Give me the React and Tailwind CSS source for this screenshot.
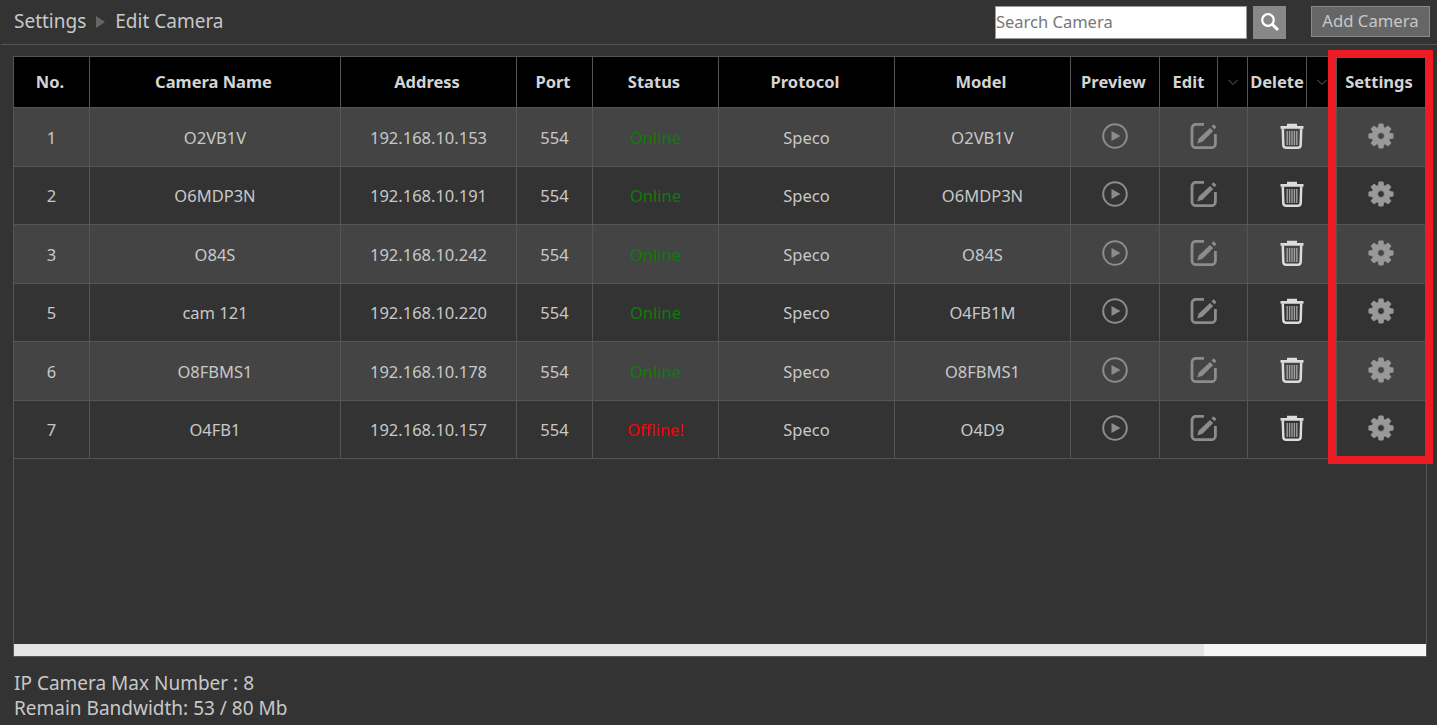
const cameras = [
  { no: 1, name: 'O2VB1V', address: '192.168.10.153', status: 'Online', model: 'O2VB1V' },
  { no: 2, name: 'O6MDP3N', address: '192.168.10.191', status: 'Online', model: 'O6MDP3N' },
  { no: 3, name: 'O84S', address: '192.168.10.242', status: 'Online', model: 'O84S' },
  { no: 5, name: 'cam 121', address: '192.168.10.220', status: 'Online', model: 'O4FB1M' },
  { no: 6, name: 'O8FBMS1', address: '192.168.10.178', status: 'Online', model: 'O8FBMS1' },
  { no: 7, name: 'O4FB1', address: '192.168.10.157', status: 'Offline!', model: 'O4D9' },
]

// 8 tooth gear outline, hole cut with evenodd
const gearPath = (() => {
  const pts = []
  for (let i = 0; i < 8; i++) {
    const a = (i * Math.PI) / 4 - Math.PI / 2
    const at = (r, d) => `${(13 + r * Math.cos(a + d)).toFixed(2)} ${(13 + r * Math.sin(a + d)).toFixed(2)}`
    pts.push(at(9, -0.3), at(12.3, -0.17), at(12.3, 0.17), at(9, 0.3))
  }
  const hole = 'M9.600 13a3.400 3.400 0 1 0 6.800 0a3.400 3.400 0 1 0 -6.800 0z'
  return `M${pts.join('L')}z ${hole}`
})()

function PlayIcon() {
  return (
    <svg width="28" height="28" viewBox="0 0 28 28" fill="none" className="text-[#8c8c8c]">
      <circle cx="14" cy="14" r="11.8" stroke="currentColor" strokeWidth="2" />
      <path d="M10.500 9 19.500 14l-9 5z" fill="currentColor" />
    </svg>
  )
}

function EditIcon() {
  return (
    <svg width="27" height="26" viewBox="0 0 27 26" fill="none" className="text-[#8c8c8c]">
      <path d="M14 2.300H6A4 4 0 0 0 2 6.300v15.400a4 4 0 0 0 4 4h15.400a4 4 0 0 0 4-4V12" stroke="currentColor" strokeWidth="2.800" transform="translate(0 -1)" />
      <path d="M20 5 23.200 8 12.500 18.800 7.200 20.500 8.800 15.500z" fill="currentColor" />
      <path d="M21.500 3.500 23.500 1.200 26.500 4 24.500 6.300z" fill="currentColor" />
    </svg>
  )
}

function TrashIcon() {
  return (
    <svg width="24" height="26" viewBox="0 0 24 26" fill="none" className="text-[#dcdcdc]">
      <path d="M0.500 3h23v2.700H0.500z M7 3V0.700h10V3z" fill="currentColor" />
      <path d="M2.800 5.500 3.300 22q0.100 2.800 3 2.800h11.400q2.900 0 3-2.800L21.200 5.500" stroke="currentColor" strokeWidth="2.500" />
      <path d="M7.200 8v14M9.600 8v14M12 8v14M14.400 8v14M16.800 8v14" stroke="#a0a0a0" strokeWidth="1.400" />
    </svg>
  )
}

function GearIcon() {
  return (
    <svg width="26" height="26" viewBox="0 0 26 26" className="text-[#999]">
      <path d={gearPath} fill="currentColor" fillRule="evenodd" stroke="currentColor" strokeWidth="0.800" strokeLinejoin="round" />
    </svg>
  )
}

function SearchIcon() {
  return (
    <svg width="20" height="20" viewBox="0 0 20 20" fill="none" className="text-white">
      <circle cx="8" cy="8" r="5.800" stroke="currentColor" strokeWidth="2.200" />
      <path d="M12.500 12.500 18 18" stroke="currentColor" strokeWidth="3" />
    </svg>
  )
}

function Chevron() {
  return (
    <svg width="12" height="7" viewBox="0 0 12 7" fill="none" className="text-[#666]">
      <path d="M1.500 1 6 5.500 10.500 1" stroke="currentColor" strokeWidth="1" />
    </svg>
  )
}

function Head({ children, className = '' }) {
  return <th className={`border border-[#555] font-bold text-[#d4d4d4] p-0 pr-[3px] ${className}`}>{children}</th>
}

function SplitHead({ label }) {
  return (
    <th className="border border-[#555] p-0 font-bold text-[#d4d4d4]">
      <div className="flex h-[50px] items-center">
        <span className="flex-1 text-center">{label}</span>
        <span className="flex h-full w-[30px] shrink-0 items-center justify-center border-l border-[#555]">
          <Chevron />
        </span>
      </div>
    </th>
  )
}

function Cell({ children, color = 'text-[#c8c8c8]' }) {
  return <td className={`border border-[#555] p-0 pt-[2px] text-center ${color}`}>{children}</td>
}

function IconCell({ children }) {
  return (
    <td className="border border-[#555] p-0 pb-[3px]">
      <div className="flex items-center justify-center">{children}</div>
    </td>
  )
}

export default function App() {
  return (
    <div className="relative h-[725px] w-[1437px] overflow-hidden bg-[#333333] font-['Noto_Sans',sans-serif] text-[#cccccc]">
      <div className="ml-[1px] flex h-[45px] items-center border-b border-[#555] pl-[13px] pr-[7px]">
        <span className="mb-[2px] text-[19px] text-[#c8c8c8]">Settings</span>
        <span className="mx-[10px] h-0 w-0 border-y-[6px] border-l-[9px] border-y-transparent border-l-[#666]"></span>
        <span className="mb-[2px] text-[19px] text-[#c8c8c8]">Edit Camera</span>
        <div className="ml-auto flex items-center">
          <input
            readOnly
            placeholder="Search Camera"
            className="h-[33px] w-[252px] border border-[#999] bg-white px-0 pb-[2px] text-[16.500px] text-[#777] placeholder:text-[#777] outline-none"
          />
          <button className="ml-[6px] flex h-[33px] w-[33px] items-center justify-center bg-[#888]">
            <SearchIcon />
          </button>
          <button className="mb-[2px] ml-[25px] h-[31px] w-[119px] border border-[#8a8a8a] bg-[#666] text-[16.700px] text-[#c8c8c8]">
            Add Camera
          </button>
        </div>
      </div>

      <div className="relative ml-[13px] mt-[11px] h-[601px] w-[1414px] border-x border-b border-[#555]">
        <table className="-ml-px w-[1412px] table-fixed border-collapse text-[16.500px]">
          <colgroup>
            <col className="w-[76px]" />
            <col className="w-[251px]" />
            <col className="w-[176px]" />
            <col className="w-[76px]" />
            <col className="w-[126px]" />
            <col className="w-[176px]" />
            <col className="w-[176px]" />
            <col className="w-[89px]" />
            <col className="w-[88px]" />
            <col className="w-[89px]" />
            <col className="w-[89px]" />
          </colgroup>
          <thead>
            <tr className="h-[51px] bg-black">
              <Head>No.</Head>
              <Head>Camera Name</Head>
              <Head>Address</Head>
              <Head>Port</Head>
              <Head>Status</Head>
              <Head>Protocol</Head>
              <Head>Model</Head>
              <Head>Preview</Head>
              <SplitHead label="Edit" />
              <SplitHead label="Delete" />
              <Head className="pr-[4px]">Settings</Head>
            </tr>
          </thead>
          <tbody>
            {cameras.map((cam, i) => (
              <tr key={cam.no} className={i % 2 === 0 ? 'h-[59px] bg-[#444444]' : 'h-[58px] bg-[#333333]'}>
                <Cell>{cam.no}</Cell>
                <Cell>{cam.name}</Cell>
                <Cell>{cam.address}</Cell>
                <Cell>554</Cell>
                <Cell color={cam.status === 'Online' ? 'text-[#0a7d0a]' : 'text-[#ff0000]'}>{cam.status}</Cell>
                <Cell>Speco</Cell>
                <Cell>{cam.model}</Cell>
                <IconCell><PlayIcon /></IconCell>
                <IconCell><EditIcon /></IconCell>
                <IconCell><TrashIcon /></IconCell>
                <IconCell><GearIcon /></IconCell>
              </tr>
            ))}
          </tbody>
        </table>

        <div className="absolute inset-x-0 bottom-0 flex h-[12px]">
          <div className="w-[1190px] bg-[#e4e4e4]"></div>
          <div className="flex-1 bg-[#f5f5f5]"></div>
        </div>
      </div>

      <div className="mt-[14px] pl-[14px] text-[19px] leading-[25px] text-[#c8c8c8]">
        <p>IP Camera Max Number : 8</p>
        <p>Remain Bandwidth: 53 / 80 Mb</p>
      </div>

      <div className="pointer-events-none absolute left-[1328px] top-[50px] h-[414px] w-[105px] border-[8px] border-[#ed1c24]"></div>
    </div>
  )
}
